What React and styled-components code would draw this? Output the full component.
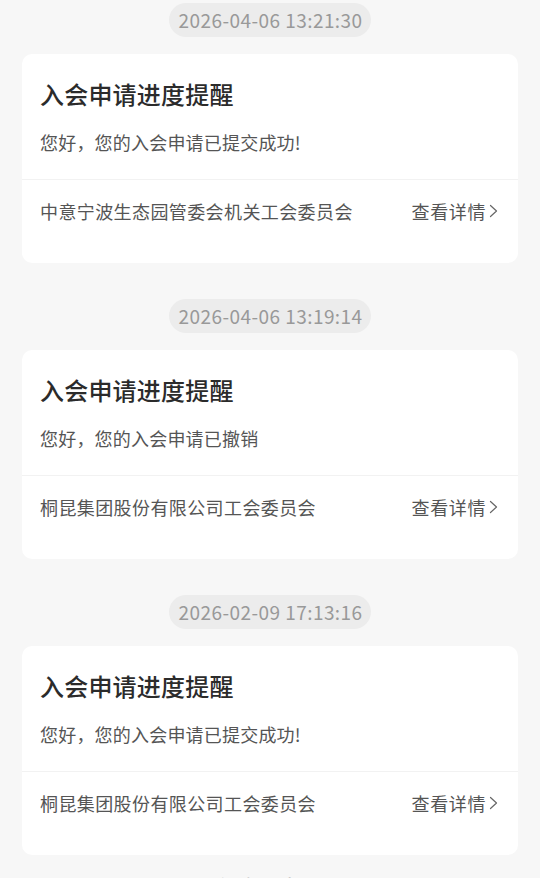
import React from "react";
import styled, { createGlobalStyle } from "styled-components";

const GlobalStyle = createGlobalStyle`
  html, body {
    margin: 0;
    padding: 0;
    overflow: hidden;
    background: #f7f7f7;
    font-family: "Noto Sans CJK SC", "Noto Sans", sans-serif;
  }
`;

const messages = [
  {
    time: "2026-04-06 13:21:30",
    title: "入会申请进度提醒",
    content: "您好，您的入会申请已提交成功!",
    org: "中意宁波生态园管委会机关工会委员会",
  },
  {
    time: "2026-04-06 13:19:14",
    title: "入会申请进度提醒",
    content: "您好，您的入会申请已撤销",
    org: "桐昆集团股份有限公司工会委员会",
  },
  {
    time: "2026-02-09 17:13:16",
    title: "入会申请进度提醒",
    content: "您好，您的入会申请已提交成功!",
    org: "桐昆集团股份有限公司工会委员会",
  },
];

const Chevron = () => (
  <svg width="9" height="16" viewBox="0 0 9 16">
    <polyline
      points="1.5,2.5 7.5,8 1.5,13.5"
      fill="none"
      stroke="#666"
      strokeWidth="1.2"
      strokeLinecap="round"
      strokeLinejoin="round"
    />
  </svg>
);

const App = () => {
  return (
    <>
      <GlobalStyle />
      <Page>
        {messages.map((msg, i) => (
          <Item key={i}>
            <TimePill>{msg.time}</TimePill>
            <Card>
              <CardTop>
                <Title>{msg.title}</Title>
                <Content>{msg.content}</Content>
              </CardTop>
              <CardFooter>
                <Org>{msg.org}</Org>
                <DetailLink>
                  查看详情
                  <Chevron />
                </DetailLink>
              </CardFooter>
            </Card>
          </Item>
        ))}
        <NoMore>没有更多了</NoMore>
      </Page>
    </>
  );
};

export default App;

const Page = styled.div`
  display: flex;
  flex-direction: column;
  padding: 3px 22px 40px;
  gap: 36px;
`;

const Item = styled.div`
  display: flex;
  flex-direction: column;
  align-items: center;
  gap: 17px;
`;

const TimePill = styled.div`
  height: 34px;
  line-height: 34px;
  padding: 0 8px 0 9px;
  border-radius: 17px;
  background: #ececec;
  color: #999;
  font-size: 19px;
  letter-spacing: 0.45px;
`;

const Card = styled.div`
  align-self: stretch;
  background: #fff;
  border-radius: 10px;
  display: flex;
  flex-direction: column;
`;

const CardTop = styled.div`
  display: flex;
  flex-direction: column;
  gap: 21px;
  padding: 26px 20px 24px 18px;
  border-bottom: 1px solid #f2f2f2;
`;

const Title = styled.div`
  font-size: 24px;
  line-height: 28px;
  letter-spacing: 0.2px;
  color: #2b2b2b;
  font-weight: 500;
`;

const Content = styled.div`
  font-size: 18px;
  line-height: 26px;
  letter-spacing: 0.2px;
  color: #555;
`;

const CardFooter = styled.div`
  display: flex;
  align-items: center;
  justify-content: space-between;
  padding: 18px 20px 39px 18px;
`;

const Org = styled.div`
  font-size: 18px;
  line-height: 26px;
  letter-spacing: 0.4px;
  color: #555;
`;

const DetailLink = styled.div`
  display: flex;
  align-items: center;
  gap: 3px;
  font-size: 18px;
  line-height: 26px;
  letter-spacing: 0.6px;
  color: #555;
`;

const NoMore = styled.div`
  margin-top: -19px;
  text-align: center;
  font-size: 20px;
  color: #bbb;
`;
